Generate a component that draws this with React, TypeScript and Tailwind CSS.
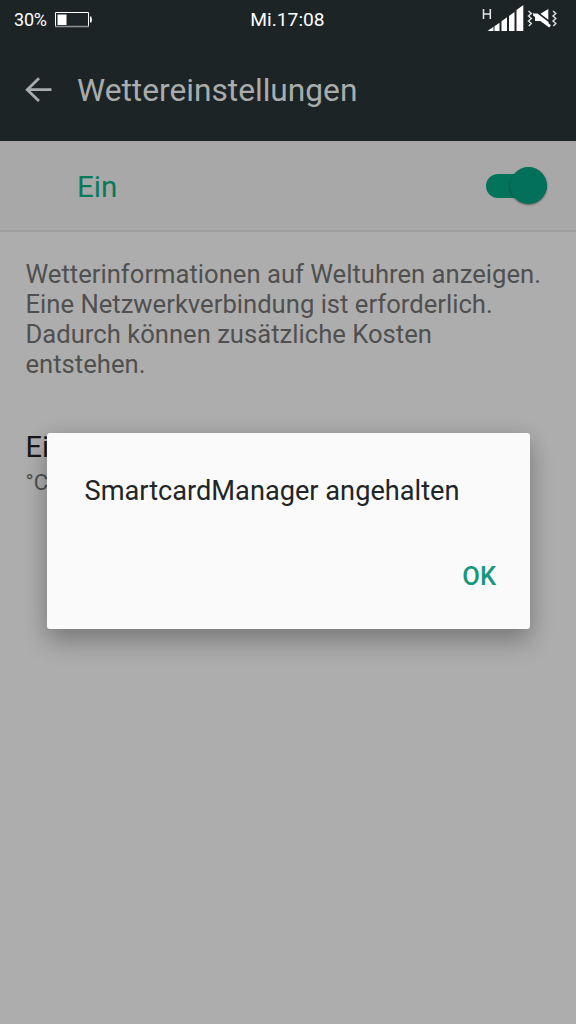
function BackArrow() {
  return (
    <svg width="28" height="28" viewBox="0 0 28 28" fill="none" stroke="#a9acac" strokeWidth="2.8" className="shrink-0">
      <path d="M26.500 12.700H2.500M14 1.300L2.200 12.700l11.800 11.400" />
    </svg>
  );
}

function Battery() {
  return (
    <svg width="40" height="18" viewBox="0 0 40 18" className="shrink-0">
      <path d="M1.500 15V1.500H34.500V15" fill="none" stroke="#fff" />
      <path d="M1 15.500H35" stroke="#8d9292" strokeWidth="1.600" />
      <rect x="3.500" y="3.500" width="9" height="10.500" fill="#fff" />
      <path d="M36 5.500h1.300q1.200 3 0 6H36z" fill="#fff" />
    </svg>
  );
}

function StatusIcons() {
  return (
    <svg width="78" height="32" viewBox="0 0 78 32" className="shrink-0">
      <path d="M3.500 5v10M10.300 5v10M4 10h6" fill="none" stroke="#e4e8e8" strokeWidth="1.500" />
      <g fill="#fff">
        <path d="M7.500 27l6-4.200V27zM14.500 22.200l5-3.500V27h-5zM21.500 17.200l5.500-3.900V27h-5.500zM29 12l5.500-4V27H29zM36.500 6l6.800-5v26h-6.800z" />
        <path d="M60.500 9.800L68.300 5v10.800zM55 9.500h2.500l11 8.500v3.800l-8-4.800H55z" />
        <path d="M53.500 8.800L71 21.300l-1.800 2.200L53 11.500z" />
      </g>
      <g fill="none" stroke="#d8dcdc" strokeWidth="1.500">
        <path d="M48.500 7l2.800 2.500-2.800 2.500 2.800 2.500-2.800 2.500 2.800 2.500-2.500 2.500" />
        <path d="M73 7l2.800 2.500-2.800 2.500 2.800 2.500-2.800 2.500 2.800 2.500-2.500 2.500" />
      </g>
    </svg>
  );
}

function Toggle() {
  return (
    <div className="flex h-[24px] w-[61px] items-center rounded-full bg-[#04735c]">
      <div className="ml-auto size-[37px] shrink-0 rounded-full bg-[#02705a] shadow-[0_1px_2px_rgba(0,0,0,0.45)]" />
    </div>
  );
}

export default function App() {
  return (
    <div className="relative h-[1024px] w-[576px] overflow-hidden bg-[#adadad] font-['Roboto',sans-serif]">
      <header className="h-[141px] bg-[#1c2426]">
        <div className="grid h-[40px] grid-cols-3 items-center text-white">
          <div className="flex items-center gap-[7px] pl-[14px] text-[18px] leading-[22px]">
            <span className="tracking-[-0.2px]">30%</span>
            <Battery />
          </div>
          <span className="pr-[1px] text-center text-[19.200px] leading-[22px]">Mi.17:08</span>
          <div className="flex justify-end pr-[18px]">
            <StatusIcons />
          </div>
        </div>
        <div className="flex h-[101px] items-center gap-[24px] pl-[25px]">
          <BackArrow />
          <h1 className="pt-[1px] text-[31.700px] leading-[40px] text-[#a9acac]">Wettereinstellungen</h1>
        </div>
      </header>
      <section className="flex h-[91px] items-center justify-between border-b-2 border-[#9e9e9e] bg-[#a8a8a8] pr-[29px] pl-[77px]">
        <span className="pt-[4px] text-[29.500px] text-[#087b5b]">Ein</span>
        <Toggle />
      </section>
      <main className="px-[25.500px] pt-[27px]">
        <p className="text-[25.640px] leading-[30px] text-[#505050]">
          Wetterinformationen auf Weltuhren anzeigen.
          <br />
          Eine Netzwerkverbindung ist erforderlich.
          <br />
          Dadurch können zusätzliche Kosten
          <br />
          entstehen.
        </p>
        <div className="mt-[51px]">
          <div className="text-[29px] leading-[34px] text-[#181818]">Einheit</div>
          <div className="mt-[5px] text-[22px] leading-[28px] text-[#505050]">°C</div>
        </div>
      </main>
      <div role="dialog" className="absolute top-[433px] left-[46.500px] flex h-[196px] w-[483px] flex-col justify-between rounded-[3px] bg-[#fafafa] pt-[41px] pr-[33.500px] pb-[38px] pl-[38px] shadow-[0_14px_24px_rgba(0,0,0,0.24),0_0_20px_rgba(0,0,0,0.1)]">
        <p className="text-[27.200px] leading-[34px] text-[#212526]">SmartcardManager angehalten</p>
        <button className="self-end text-[25.500px] leading-[30px] font-medium text-[#16977a]">OK</button>
      </div>
    </div>
  );
}
